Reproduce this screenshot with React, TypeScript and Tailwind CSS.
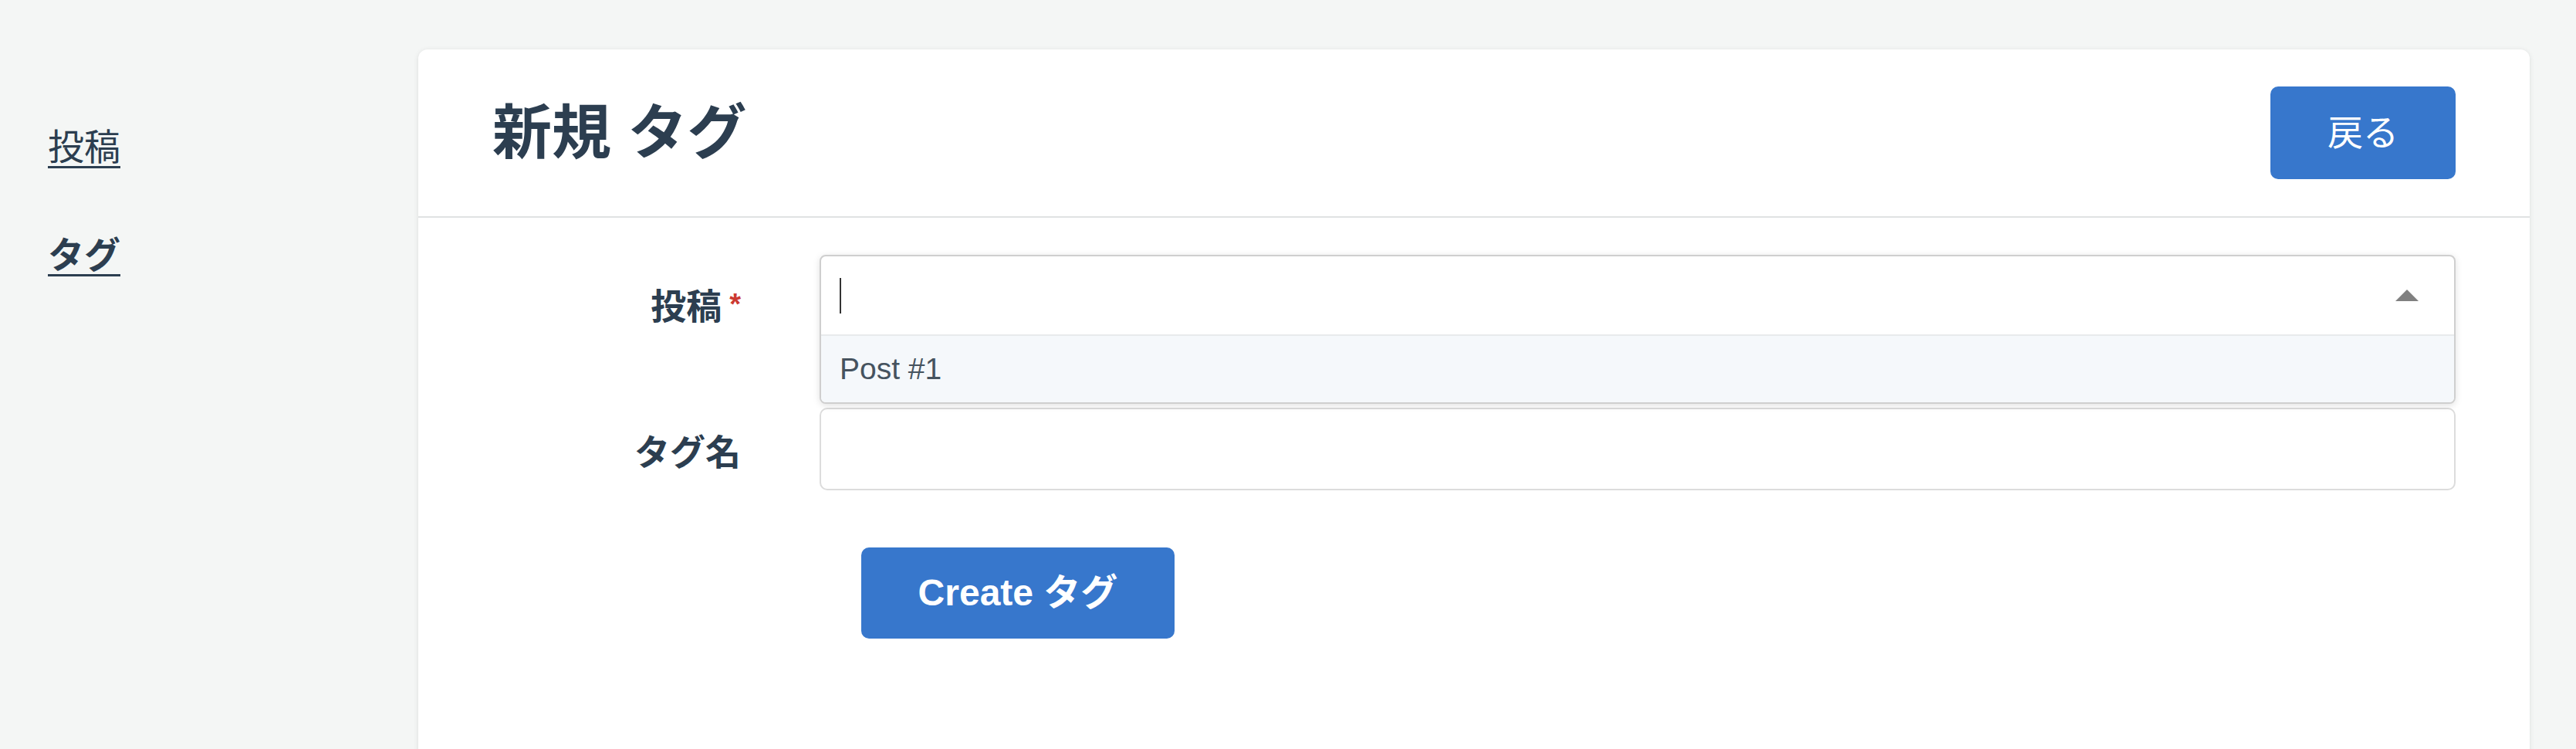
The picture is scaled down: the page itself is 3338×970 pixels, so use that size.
import React from "react";

const App = () => {
  return (
    <div className="flex h-[970px] w-full overflow-hidden bg-[#f4f6f5] font-['Liberation_Sans','Noto_Sans_CJK_JP',sans-serif] text-[#2c3e50]">
      {/* sidebar */}
      <div className="flex w-[542px] shrink-0 flex-col gap-[76px] pl-[62px] pt-[159px]">
        <a href="#" className="w-fit text-[47px] leading-[64px] underline decoration-[3px] underline-offset-[8px]">
          投稿
        </a>
        <a href="#" className="w-fit text-[47px] font-bold leading-[64px] underline decoration-[3px] underline-offset-[8px]">
          タグ
        </a>
      </div>

      {/* main card */}
      <div className="mr-[60px] mt-[64px] h-[1000px] flex-1 rounded-[12px] bg-white shadow-[0_1px_6px_rgba(0,0,0,0.1)]">
        <div className="flex h-[218px] items-center justify-between border-b-2 border-[#e0e2e3] px-[96px]">
          <h1 className="text-[77px] font-bold leading-none">新規 タグ</h1>
          <button className="h-[120px] w-[240px] rounded-[10px] bg-[#3777cc] text-[46px] text-white">
            戻る
          </button>
        </div>

        <div className="px-[96px] pt-[48px]">
          {/* row 1 */}
          <div className="flex">
            <label className="w-[322px] shrink-0 pt-[35px] text-right text-[46px] font-bold leading-[64px]">
              投稿
              <span className="relative top-[-6px] ml-[10px] text-[38px] text-[#cc3a32]">*</span>
            </label>
            <div className="relative ml-[102px] h-[102px] flex-1">
              <div className="absolute left-0 right-0 top-0 z-10 overflow-hidden rounded-[8px] border-2 border-[#cfcfcf] bg-white shadow-[0_2px_10px_rgba(0,0,0,0.12)]">
                <div className="flex h-[101px] items-center justify-between pl-[24px] pr-[46px]">
                  <div className="h-[46px] w-[2px] bg-[#333]" />
                  <svg width="30" height="15" viewBox="0 0 30 15">
                    <polygon points="15,0 30,15 0,15" fill="#808080" />
                  </svg>
                </div>
                <div className="flex h-[88px] items-center border-t-2 border-[#e8eaec] bg-[#f5f8fb] pl-[24px] text-[39px] text-[#46535f]">
                  Post #1
                </div>
              </div>
            </div>
          </div>

          {/* row 2 */}
          <div className="mt-[96px] flex items-start">
            <label className="w-[322px] shrink-0 pt-[26px] text-right text-[46px] font-bold leading-[64px]">タグ名</label>
            <input className="ml-[102px] h-[107px] flex-1 rounded-[10px] border-2 border-[#dcdcdc] bg-white outline-none" />
          </div>

          <div className="ml-[478px] mt-[74px]">
            <button className="h-[118px] w-[406px] rounded-[10px] bg-[#3777cc] text-[48px] font-bold text-white">
              Create タグ
            </button>
          </div>
        </div>
      </div>
    </div>
  );
};

export default App;
